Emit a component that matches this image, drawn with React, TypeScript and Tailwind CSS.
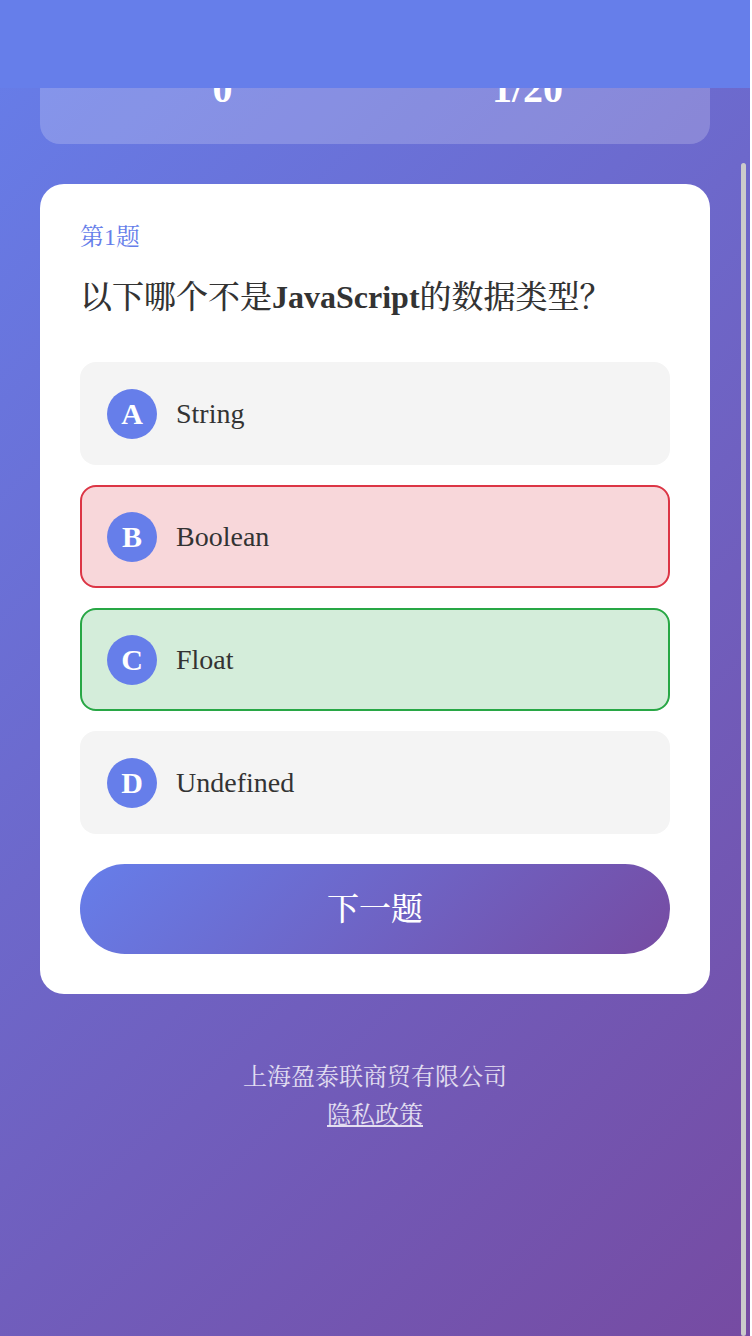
import { useState } from "react";

const OPTIONS = [
  { key: "A", text: "String" },
  { key: "B", text: "Boolean" },
  { key: "C", text: "Float" },
  { key: "D", text: "Undefined" },
];

// B was picked (wrong), C is the right answer
const PICKED = "B";
const ANSWER = "C";

function optionClass(key: string) {
  if (key === PICKED && key !== ANSWER) return "bg-[#f8d7da] border-[#dc3545]";
  if (key === ANSWER) return "bg-[#d4edda] border-[#28a745]";
  return "bg-[#f4f4f4] border-transparent";
}

export default function App() {
  const [score] = useState(0);
  const [current] = useState(1);

  return (
    <div className="relative w-[750px] min-h-[1336px] bg-[linear-gradient(135deg,#667eea_0%,#764ba2_100%)] font-['Liberation_Serif','Noto_Serif_CJK_SC','AR_PL_UMing_CN',serif] text-[#333]">
      {/* fixed header */}
      <div className="fixed top-0 left-0 w-[750px] h-[88px] bg-[#667eea] z-10" />

      {/* scroll thumb */}
      <div className="fixed right-[6px] top-[163px] bottom-0 w-[5px] rounded-full bg-[#cbcbcb] z-10" />

      <div className="px-[40px] pt-[4px]">
        {/* stats */}
        <div className="grid grid-cols-2 rounded-[20px] bg-white/20 px-[30px] pt-[35px] pb-[25px] text-white text-center">
          <div>
            <p className="text-[24px] leading-[20px] opacity-80">得分</p>
            <p className="text-[40px] font-bold leading-normal">{score}</p>
          </div>
          <div>
            <p className="text-[24px] leading-[20px] opacity-80">进度</p>
            <p className="text-[40px] font-bold leading-normal">{current}/20</p>
          </div>
        </div>

        {/* question card */}
        <div className="mt-[40px] rounded-[24px] bg-white p-[40px]">
          <p className="text-[24px] leading-[26px] text-[#667eea]">第{current}题</p>
          <h2 className="mt-[22px] text-[32px] font-bold leading-[50px] whitespace-nowrap">
            <span className="font-medium">以下哪个不是</span>JavaScript<span className="font-medium">的数据类型？</span>
          </h2>

          <div className="mt-[40px] flex flex-col gap-[20px]">
            {OPTIONS.map((o) => (
              <div
                key={o.key}
                className={`flex h-[103px] items-center gap-[19px] rounded-[16px] border-2 px-[25px] ${optionClass(o.key)}`}
              >
                <span className="flex h-[50px] w-[50px] shrink-0 items-center justify-center rounded-full bg-[#667eea] text-[30px] font-bold text-white">
                  {o.key}
                </span>
                <span className="text-[28px]">{o.text}</span>
              </div>
            ))}
          </div>

          <button className="mt-[30px] flex h-[90px] w-full items-center justify-center rounded-full bg-[linear-gradient(135deg,#667eea_0%,#764ba2_100%)] text-[32px] font-medium text-white">
            下一题
          </button>
        </div>

        {/* footer */}
        <div className="mt-[64px] flex flex-col items-center text-[24px] leading-[38px] text-white/80">
          <p>上海盈泰联商贸有限公司</p>
          <a className="underline">隐私政策</a>
        </div>
      </div>
    </div>
  );
}
